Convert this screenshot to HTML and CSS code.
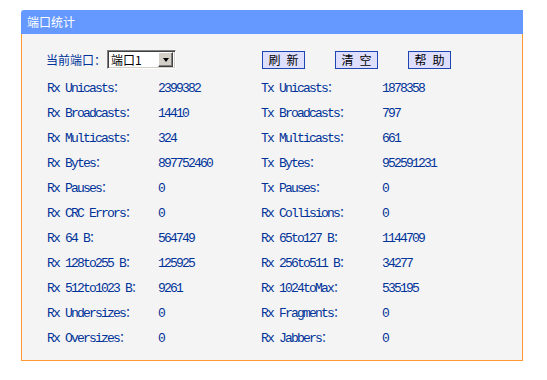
FILE: index.html
```html
<!DOCTYPE html>
<html>
<head>
<meta charset="utf-8">
<link rel="stylesheet" href="styles.css">
</head>
<body>
<div class="panel">
  <div class="panel-head">端口统计</div>
  <div class="panel-body">
    <div class="toolbar">
      <span class="port-label">当前端口：</span>
      <div class="select">
        <span class="select-text">端口1</span>
        <span class="select-btn"><span class="tri"></span></span>
      </div>
      <button class="btn btn-refresh"><span>刷</span><span>新</span></button>
      <button class="btn btn-clear"><span>清</span><span>空</span></button>
      <button class="btn btn-help"><span>帮</span><span>助</span></button>
    </div>
    <div class="stats">
      <span class="lbl">Rx Unicasts<i>：</i></span><span class="val">2399382</span><span class="lbl">Tx Unicasts<i>：</i></span><span class="val">1878358</span>
      <span class="lbl">Rx Broadcasts<i>：</i></span><span class="val">14410</span><span class="lbl">Tx Broadcasts<i>：</i></span><span class="val">797</span>
      <span class="lbl">Rx Multicasts<i>：</i></span><span class="val">324</span><span class="lbl">Tx Multicasts<i>：</i></span><span class="val">661</span>
      <span class="lbl">Rx Bytes<i>：</i></span><span class="val">897752460</span><span class="lbl">Tx Bytes<i>：</i></span><span class="val">952591231</span>
      <span class="lbl">Rx Pauses<i>：</i></span><span class="val">0</span><span class="lbl">Tx Pauses<i>：</i></span><span class="val">0</span>
      <span class="lbl">Rx CRC Errors<i>：</i></span><span class="val">0</span><span class="lbl">Rx Collisions<i>：</i></span><span class="val">0</span>
      <span class="lbl">Rx 64 B<i>：</i></span><span class="val">564749</span><span class="lbl">Rx 65to127 B<i>：</i></span><span class="val">1144709</span>
      <span class="lbl">Rx 128to255 B<i>：</i></span><span class="val">125925</span><span class="lbl">Rx 256to511 B<i>：</i></span><span class="val">34277</span>
      <span class="lbl">Rx 512to1023 B<i>：</i></span><span class="val">9261</span><span class="lbl">Rx 1024toMax<i>：</i></span><span class="val">535195</span>
      <span class="lbl">Rx Undersizes<i>：</i></span><span class="val">0</span><span class="lbl">Rx Fragments<i>：</i></span><span class="val">0</span>
      <span class="lbl">Rx Oversizes<i>：</i></span><span class="val">0</span><span class="lbl">Rx Jabbers<i>：</i></span><span class="val">0</span>
    </div>
  </div>
</div>
</body>
</html>
```

FILE: styles.css
```css
html, body {
  margin: 0;
  padding: 0;
  background: #ffffff;
}
body {
  font-family: "Noto Sans CJK SC", "Liberation Sans", sans-serif;
  font-size: 12px;
}
.panel {
  margin: 10px 0 0 21px;
  width: 502px;
}
.panel-head {
  height: 24px;
  line-height: 23px;
  background: #6699ff;
  color: #ffffff;
  padding-left: 6px;
  font-size: 12px;
  border-top-left-radius: 3px;
}
.panel-body {
  background: #f4f4f4;
  border: 1px solid #ff9933;
  border-top: none;
  height: 327px;
  box-sizing: border-box;
  padding: 16px 0 0 24px;
}
.toolbar {
  display: flex;
  align-items: center;
  height: 19px;
}
.port-label {
  color: #003399;
  width: 61px;
  white-space: nowrap;
  line-height: 19px;
}
.select {
  width: 69px;
  height: 19px;
  box-sizing: border-box;
  border: 1px solid;
  border-color: #808080 #ffffff #ffffff #808080;
  box-shadow: inset 1px 1px 0 #404040, inset -1px -1px 0 #d4d0c8;
  background: #ffffff;
  display: flex;
  align-items: center;
  padding: 1px 2px 1px 3px;
}
.select-text {
  flex: 1;
  color: #000000;
  font-size: 12px;
  line-height: 15px;
}
.select-btn {
  width: 15px;
  height: 15px;
  box-sizing: border-box;
  background: #d4d0c8;
  border: 1px solid;
  border-color: #ffffff #404040 #404040 #ffffff;
  box-shadow: inset -1px -1px 0 #808080;
  display: flex;
  align-items: center;
  justify-content: center;
}
.tri {
  width: 0;
  height: 0;
  border-left: 3.5px solid transparent;
  border-right: 3.5px solid transparent;
  border-top: 4px solid #000000;
}
.btn {
  height: 18px;
  width: 43px;
  box-sizing: border-box;
  border: 1px solid #1f45b0;
  background: #dedeff;
  color: #000000;
  font-family: "Noto Sans CJK SC", sans-serif;
  font-size: 12px;
  line-height: 16px;
  padding: 0;
  margin: 0;
  display: flex;
  justify-content: center;
  align-items: center;
  gap: 6px;
}
.btn-refresh { margin-left: 86px; }
.btn-clear { margin-left: 30px; }
.btn-help { margin-left: 30px; }
.stats {
  margin-top: 7px;
  display: grid;
  grid-template-columns: 111px 104px 121px 1fr;
  grid-auto-rows: 25px;
  color: #003399;
}
.lbl, .val {
  display: block;
  font-family: "Liberation Mono", monospace;
  font-size: 13px;
  letter-spacing: -1.8px;
  white-space: pre;
  line-height: 25px;
  height: 25px;
  overflow: visible;
}
.stats .lbl:nth-child(4n+1),
.stats .val:nth-child(4n+2) {
  padding-left: 1px;
}
.lbl i {
  font-style: normal;
  font-family: "Noto Sans CJK SC", sans-serif;
  font-size: 12px;
  letter-spacing: 0;
  line-height: 0;
}
```
